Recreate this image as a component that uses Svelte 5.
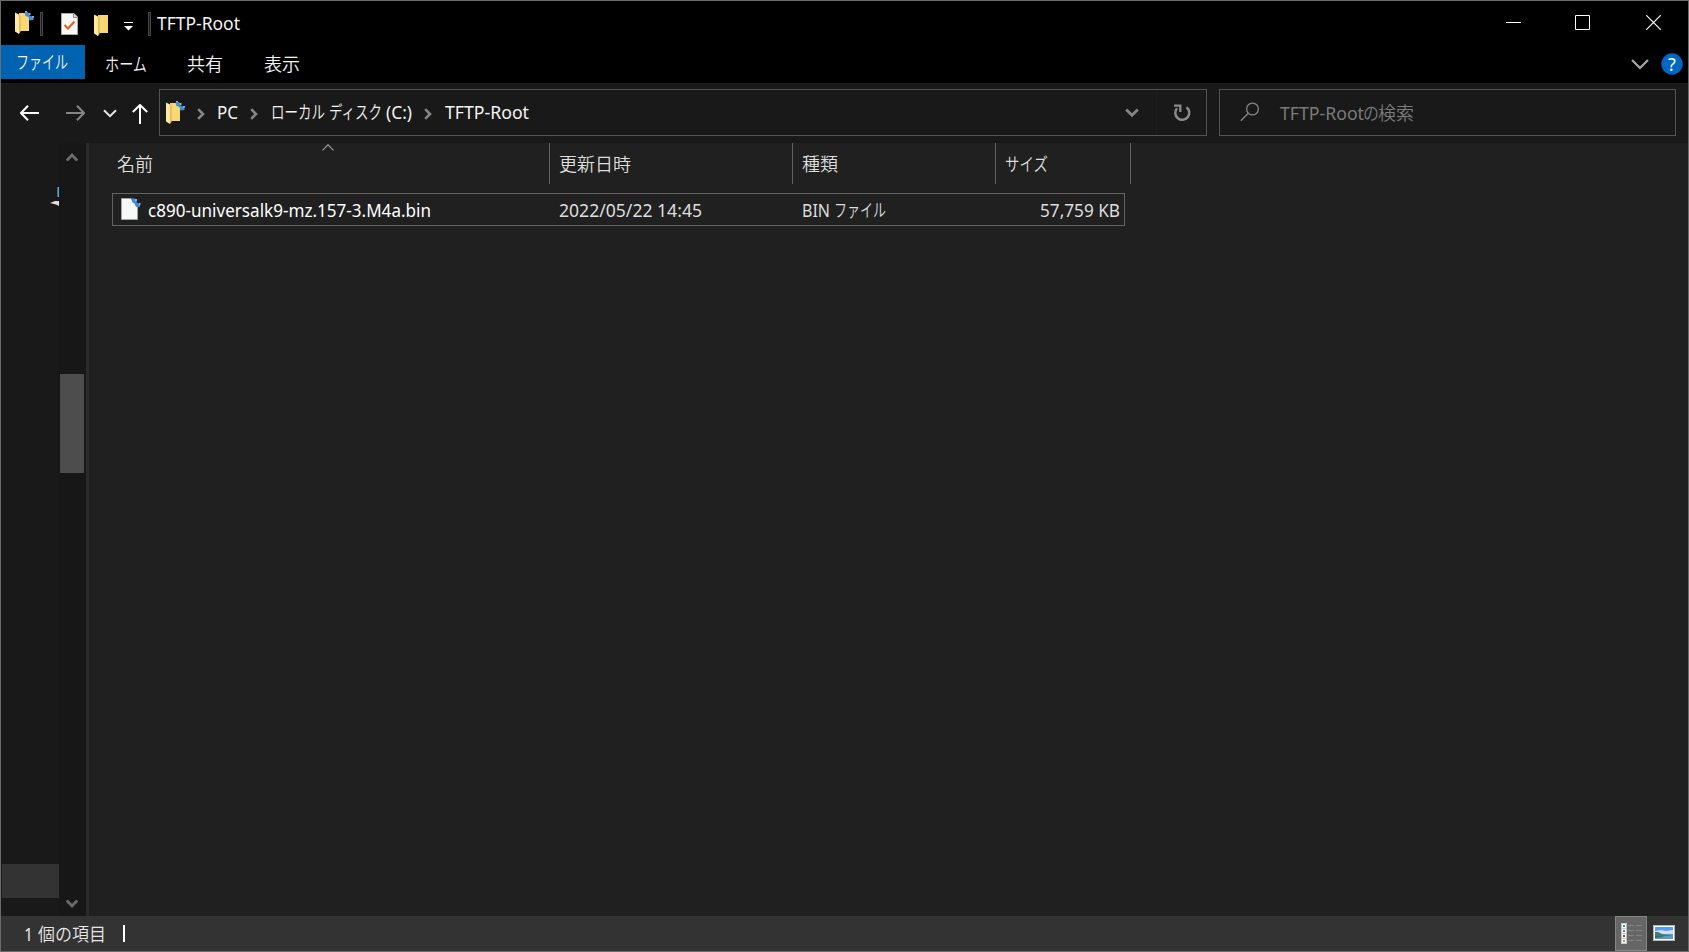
<script lang="ts">
  // One run of text: the string, its left edge and its drawn width.
  type Run = [string, number, number];

  const tabs: { run: Run; left: number }[] = [
    { run: ['ホーム', 0, 42], left: 20 },
    { run: ['共有', 0, 36], left: 40 },
    { run: ['表示', 0, 36], left: 41 }
  ];

  const crumbs: { runs: Run[]; width: number }[] = [
    { runs: [['PC', 0, 21]], width: 22 },
    { runs: [['ローカル', 0, 54], ['ディスク', 58, 53], ['(C:)', 115, 26]], width: 142 },
    { runs: [['TFTP-Root', 0, 84]], width: 84 }
  ];

  const columns: { run: Run; width: number; sorted?: boolean }[] = [
    { run: ['名前', 0, 36], width: 433, sorted: true },
    { run: ['更新日時', 0, 72], width: 243 },
    { run: ['種類', 0, 36], width: 203 },
    { run: ['サイズ', 0, 43], width: 135 }
  ];

  const file: { name: Run[]; modified: Run[]; kind: Run[]; size: Run[] } = {
    name: [['c890-universalk9-mz.157-3.M4a.bin', 0, 283]],
    modified: [['2022/05/22 14:45', 0, 143]],
    kind: [['BIN', 0, 28], ['ファイル', 32, 52]],
    size: [['57,759 KB', 0, 80]]
  };

  // Japanese runs are set a step lighter than the Latin ones.
  const isLatin = (text: string) => /^[\x20-\x7e]+$/.test(text);
</script>

{#snippet label(runs: Run[], width: number)}
  <svg class="label" {width} height="26">
    <text y="19">
      {#each runs as [text, x, w]}<tspan class:latin={isLatin(text)} {x} textLength={w} lengthAdjust="spacingAndGlyphs">{text}</tspan>{/each}
    </text>
  </svg>
{/snippet}

{#snippet folder(synced: boolean)}
  <svg class="folder" width="20" height="24" viewBox="0 0 20 24">
    <path d="M4 2H14V20H4z" fill="#f2cd66" />
    <path d="M6 2H14V20H6z" fill="#f8d775" />
    <path d="M0 1.5L4 3.5V23L0 20.5z" fill="#ffe9a6" />
    <path d="M4 3.5L5.5 5V21L4 23z" fill="#e8bd55" />
    {#if synced}
      <path d="M9.5 1.5L13 1L14.5 4.5L18.5 6V9L14.5 9.5L13.5 6L10.5 5z" fill="#3f8fd8" />
      <path d="M10 0h2v1.5h-2zM14 2h1.5v2h-1.5zM17 5h2v1.5h-2z" fill="#8fb4d4" />
    {/if}
  </svg>
{/snippet}

<div class="window">
  <header class="title-bar">
    <span class="app-icon">{@render folder(true)}</span>
    <i class="grip"></i>
    <svg class="properties" width="17" height="22" viewBox="0 0 17 22">
      <path d="M.5.5H13L16.5 4V21.5H.5z" fill="#f8f8f8" stroke="#aaa" />
      <path d="M12.5.5V4.5H16.5" fill="#ddd" stroke="#888" />
      <path d="M3.5 12L7 15.5L13.5 8.5" fill="none" stroke="#eb5b1d" stroke-width="2" />
    </svg>
    <span class="new-folder">{@render folder(false)}</span>
    <svg class="customize" width="9" height="11" viewBox="0 0 9 11">
      <path d="M0 1.5H9" stroke="#fff" />
      <path d="M0 5H9L4.5 9.5z" fill="#fff" />
    </svg>
    <i class="grip second"></i>
    <span class="title">{@render label([['TFTP-Root', 0, 83]], 84)}</span>
    <div class="controls">
      <svg width="15" height="15"><path d="M0 7.5H15" /></svg>
      <svg width="15" height="15"><path d="M.5.5H14.5V14.5H.5z" /></svg>
      <svg width="15" height="15"><path d="M.3.3L14.7 14.7M14.7.3L.3 14.7" stroke-width="1.2" /></svg>
    </div>
  </header>

  <nav class="ribbon">
    <div class="file-tab">{@render label([['ファイル', 0, 52]], 52)}</div>
    {#each tabs as tab}
      <div class="tab" style:margin-left="{tab.left}px">{@render label([tab.run], tab.run[2])}</div>
    {/each}
    <svg class="expand" width="18" height="11" viewBox="0 0 18 11">
      <path d="M1 1L9 9L17 1" fill="none" stroke="#a9a9a9" stroke-width="2.2" />
    </svg>
    <svg class="help" width="22" height="22" viewBox="0 0 22 22">
      <circle cx="11" cy="11" r="10.7" fill="#0067c5" />
      <text x="11" y="17.5" text-anchor="middle">?</text>
    </svg>
  </nav>

  <div class="nav-bar">
    <div class="history">
      <svg width="19" height="16" viewBox="0 0 19 16">
        <path d="M8 .8L1 8L8 15.2M1 8H19" stroke="#fff" />
      </svg>
      <svg class="forward" width="19" height="16" viewBox="0 0 19 16">
        <path d="M11 .8L18 8L11 15.2M18 8H0" stroke="#858585" />
      </svg>
      <svg class="recent" width="14" height="9" viewBox="0 0 14 9">
        <path d="M1 1.2L7 7.2L13 1.2" stroke="#e6e6e6" />
      </svg>
      <svg class="up" width="16" height="20" viewBox="0 0 16 20">
        <path d="M.8 8L8 1L15.2 8M8 1V20" stroke="#fff" />
      </svg>
    </div>

    <div class="address">
      {@render folder(true)}
      {#each crumbs as crumb}
        <svg class="crumb-arrow" width="8" height="12" viewBox="0 0 8 12">
          <path d="M1.2 1.2L6 6L1.2 10.8" fill="none" stroke="#868686" stroke-width="2.6" />
        </svg>
        {@render label(crumb.runs, crumb.width)}
      {/each}
      <svg class="drop" width="14" height="10" viewBox="0 0 14 10">
        <path d="M1.2 1.5L7 7.3L12.8 1.5" fill="none" stroke="#858585" stroke-width="2.8" />
      </svg>
      <div class="refresh">
        <svg width="18" height="18" viewBox="0 0 18 18">
          <path d="M13.5 3.2A7 7 0 1 1 4 4.2" fill="none" stroke="#8a8a8a" stroke-width="2.5" />
          <path d="M1 1.6H7.3V8" fill="none" stroke="#8a8a8a" stroke-width="2.3" />
        </svg>
      </div>
    </div>

    <div class="search">
      <svg width="20" height="20" viewBox="0 0 20 20">
        <circle cx="12.5" cy="7" r="5.9" fill="none" stroke="#858585" stroke-width="1.3" />
        <path d="M8.3 11.3L.8 18.8" stroke="#858585" stroke-width="1.4" />
      </svg>
      {@render label([['TFTP-Root', 0, 84], ['の', 83, 16], ['検索', 98, 36]], 134)}
    </div>
  </div>

  <div class="body">
    <aside class="tree">
      <svg class="network" width="9" height="20" viewBox="0 0 9 20">
        <path d="M7.5 0H9V10H7.5z" fill="#4db5f5" />
        <path d="M0 16L5 14H9V19L6 17.5z" fill="#dedede" />
      </svg>
      <div class="selected"></div>
    </aside>
    <div class="scrollbar">
      <svg width="12" height="10" viewBox="0 0 12 10"><path d="M.7 8.5L6 3L11.3 8.5" /></svg>
      <div class="thumb"></div>
      <svg width="12" height="10" viewBox="0 0 12 10"><path d="M.7 1.5L6 7L11.3 1.5" /></svg>
    </div>

    <main>
      <div class="columns">
        {#each columns as column}
          <div class="column" style:width="{column.width}px">
            {@render label([column.run], column.run[2])}
            {#if column.sorted}
              <svg class="sort" width="12" height="7" viewBox="0 0 12 7">
                <path d="M.5 6.3L6 .8L11.5 6.3" fill="none" stroke="#a0a0a0" stroke-width="1.1" />
              </svg>
            {/if}
          </div>
        {/each}
      </div>
      <div class="row">
        <svg class="file-icon" width="20" height="23" viewBox="0 0 20 23">
          <path d="M.5.5H10L16.5 7V21.5H.5z" fill="#f7f8f9" stroke="#a3a3a3" />
          <path d="M10 .5H14L15 4L19 6V9H15L13.5 5.5L11.5 4.5z" fill="#3b8ddb" />
          <path d="M14 1h2v2.5h-2zM18 5h1.5v2h-1.5z" fill="#8fb4d4" />
        </svg>
        <span class="name">{@render label(file.name, 284)}</span>
        <span class="modified">{@render label(file.modified, 143)}</span>
        <span class="kind">{@render label(file.kind, 84)}</span>
        <span class="size">{@render label(file.size, 80)}</span>
      </div>
    </main>
  </div>

  <footer>
    {@render label([['1', 0, 9], ['個の項目', 14, 68]], 83)}
    <i class="caret"></i>
    <div class="details">
      <svg width="22" height="22" viewBox="0 0 22 22">
        <rect width="6" height="21" fill="#c4c4c4" />
        {#each ['#3d8f9d', '#4a84bd', '#c0392b', '#8aa860'] as color, i}
          <rect x="1" y={i * 5 + 1} width="4" height="4" fill="#fff" />
          <rect x="2" y={i * 5 + 2} width="2" height="2" fill={color} />
          <path d="M7 {i * 5 + 2.5}h6M15 {i * 5 + 2.5}h6" stroke="#838383" />
        {/each}
      </svg>
    </div>
    <svg class="thumbnails" width="22" height="16" viewBox="0 0 22 16">
      <rect width="22" height="16" fill="#b5b5b5" />
      <rect x="1" y="1" width="20" height="14" fill="#fff" />
      <rect x="2" y="2" width="18" height="4" fill="#5b9cf0" />
      <path d="M2 6L8 5L13 6L20 5V9H2z" fill="#c9e1f5" />
      <path d="M2 9H20V14H2z" fill="#5d9bc6" />
      <path d="M2 7H5L9 9L15 10L20 11H2z" fill="#467b66" />
      <path d="M2 11H8L12 12L2 13z" fill="#37667e" />
    </svg>
  </footer>
</div>

<style>
  :global(body) {
    background: #000;
  }
  .window {
    box-sizing: border-box;
    width: 1689px;
    height: 952px;
    display: flex;
    flex-direction: column;
    border: 1px solid #6b6b6b;
    background: #202020;
    font-family: "Noto Sans", "Noto Sans CJK JP", sans-serif;
    font-size: 18px;
    overflow: hidden;
  }
  svg {
    display: block;
    flex: none;
  }
  .label {
    overflow: visible;
    fill: #f4f4f4;
    font-weight: 350;
  }
  .latin { font-weight: 400; }

  .title-bar {
    height: 44px;
    display: flex;
    align-items: flex-start;
    background: #000;
  }
  .app-icon { margin: 10px 0 0 14px; }
  .grip {
    box-sizing: border-box;
    width: 3px;
    height: 24px;
    margin: 11px 0 0 5px;
    border: 1px solid #484848;
    background: #1c1c1c;
  }
  .properties { margin: 12px 0 0 18px; }
  .new-folder { margin: 12px 0 0 16px; }
  .customize { margin: 20px 0 0 10px; }
  .grip.second { margin-left: 15px; }
  .title { margin: 10px 0 0 6px; }
  .controls {
    display: flex;
    gap: 54px;
    margin: 14px 27px 0 auto;
  }
  .controls svg:last-child { margin-left: 2px; }
  .controls path {
    fill: none;
    stroke: #fff;
  }

  .ribbon {
    height: 38px;
    display: flex;
    align-items: flex-start;
    background: #000;
  }
  .file-tab {
    box-sizing: border-box;
    width: 84px;
    height: 34px;
    padding: 5px 0 0 15px;
    background: #0063b1;
  }
  .tab { padding-top: 7px; }
  .expand { margin: 14px 0 0 auto; }
  .help {
    margin: 8px 5px 0 12px;
    font-size: 18px;
    fill: #fff;
  }

  .nav-bar {
    height: 60px;
    display: flex;
    background: #191919;
  }
  .history {
    width: 158px;
    display: flex;
    align-items: flex-start;
  }
  .history svg { margin: 22px 0 0 19px; }
  .history path {
    fill: none;
    stroke-width: 2;
  }
  .history .forward { margin-left: 27px; }
  .history .recent { margin: 26px 0 0 18px; }
  .history .up { margin: 21px 0 0 15px; }
  .address,
  .search {
    box-sizing: border-box;
    height: 47px;
    margin-top: 6px;
    display: flex;
    align-items: center;
    border: 1px solid #535353;
  }
  .address {
    width: 1048px;
    padding-left: 6px;
  }
  .crumb-arrow { margin: 2px 12px 0 11px; }
  .address .label ~ .label { margin-left: 1px; }
  .drop { margin: 0 17px 0 auto; }
  .refresh {
    width: 50px;
    height: 45px;
    box-sizing: border-box;
    padding: 14px 0 0 16px;
    border-left: 1px solid #1e1e1e;
  }
  .search {
    width: 457px;
    margin-left: 12px;
    padding-left: 20px;
  }
  .search svg:first-child { margin-top: -1px; }
  .search .label {
    margin: 2px 0 0 20px;
    fill: #7b7b7b;
  }

  .body {
    height: 773px;
    display: flex;
  }
  .tree {
    width: 58px;
    display: flex;
    flex-direction: column;
    align-items: flex-end;
    background: #191919;
  }
  .network { margin-top: 44px; }
  .selected {
    width: 57px;
    height: 34px;
    margin: auto 0 18px;
    background: #333;
  }
  .scrollbar {
    box-sizing: border-box;
    width: 27px;
    padding: 9px 2px 7px 1px;
    display: flex;
    flex-direction: column;
    align-items: center;
    background: #171717;
  }
  .scrollbar path {
    fill: none;
    stroke: #6c6c6c;
    stroke-width: 2.8;
  }
  .thumb {
    width: 24px;
    height: 99px;
    margin: 212px 0 auto;
    background: #4d4d4d;
  }
  main {
    flex: 1;
    border-left: 3px solid #2b2b2b;
    background: #202020;
  }
  .columns {
    height: 50px;
    display: flex;
    padding-left: 28px;
  }
  .column {
    position: relative;
    box-sizing: border-box;
    height: 41px;
    padding: 9px 0 0 9px;
    border-right: 1px solid #636363;
  }
  .column:first-child { padding-left: 0; }
  .column .label { fill: #dedede; }
  .sort {
    position: absolute;
    left: 205px;
    top: 1px;
  }
  .row {
    box-sizing: border-box;
    width: 1013px;
    height: 33px;
    margin-left: 23px;
    padding-left: 8px;
    display: flex;
    align-items: flex-start;
    border: 1px solid #636363;
  }
  .file-icon { margin-top: 4px; }
  .row span { margin-top: 4px; }
  .row .label { fill: #dedede; }
  .row .name {
    width: 411px;
    padding-left: 7px;
  }
  .row .name .label { fill: #fff; }
  .row .modified { width: 243px; }
  .row .size { margin: 4px 4px 0 auto; }

  footer {
    height: 35px;
    display: flex;
    align-items: flex-start;
    padding-left: 23px;
    background: #333;
  }
  footer .label {
    margin-top: 6px;
    fill: #e6e6e6;
  }
  .caret {
    width: 2px;
    height: 17px;
    margin: 9px 0 0 16px;
    background: #fff;
  }
  .details {
    box-sizing: border-box;
    width: 32px;
    height: 35px;
    margin-left: auto;
    padding: 6px 0 0 5px;
    border: 1px solid #858585;
    background: #666;
  }
  .thumbnails { margin: 9px 13px 0 6px; }
</style>
